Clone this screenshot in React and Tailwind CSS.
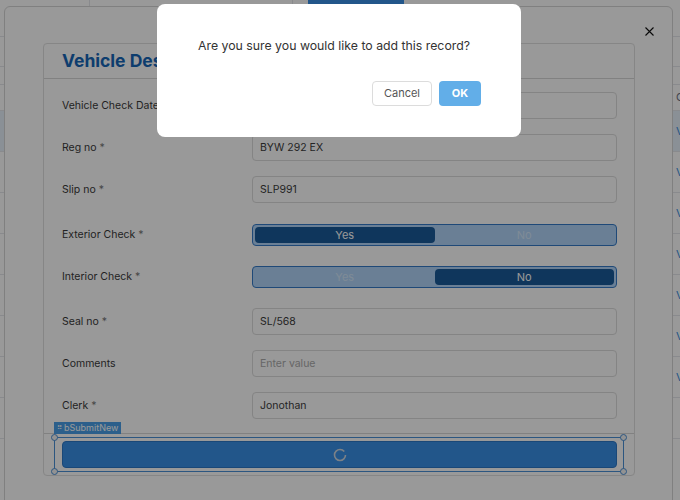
import React from 'react';

const font = { fontFamily: 'Inter, "Liberation Sans", sans-serif' };

// Rows of the table that sits behind the modal.
const tableRows = [0, 1, 2, 3, 4, 5, 6, 7];

const Background = () => (
  <div className="flex flex-col w-full">
    {/* top bar */}
    <div className="flex h-[37px] border-b border-gray-200">
      <div className="w-[90px] border-r border-gray-200" />
      <div className="w-[203px] border-r border-gray-200" />
      <div className="ml-[15px] w-[96px] h-[5px] bg-[#398fe6]" />
    </div>
    {/* filter row */}
    <div className="flex h-[48px] border-b border-gray-200">
      <div className="flex-1 border-b border-gray-200 h-[30px]" />
    </div>
    {/* header */}
    <div className="flex h-[26px] border-b border-gray-200 items-center">
      <div className="flex-1" />
      <div className="w-[7px] overflow-hidden pl-[3px] text-[11px] text-gray-500 whitespace-nowrap">Co</div>
    </div>
    {tableRows.map((r) => (
      <div
        key={r}
        className={`flex h-[41px] border-b border-gray-200 items-center ${r === 0 ? 'bg-[#e6f0fb]' : ''}`}
      >
        <div className="flex-1" />
        <div className="w-[7px] overflow-hidden pl-[3px] text-[11px] text-[#3d8fe0] whitespace-nowrap">
          {r < 7 ? 'V' : ''}
        </div>
      </div>
    ))}
  </div>
);

const Field = ({ label, required, value, placeholder, mt }) => (
  <div className={`flex items-center h-[27px] ${mt}`}>
    <div className="w-[190px] text-[10.5px] text-[#3a3a3a]">
      {label}
      {required && <span className="text-[#777]"> *</span>}
    </div>
    <div className="flex-1 h-[27px] border border-[#dcdcdc] rounded px-[7px] flex items-center text-[10.5px]">
      {value ? (
        <span className="text-[#3c3c3c]">{value}</span>
      ) : (
        <span className="text-[#ababab]">{placeholder}</span>
      )}
    </div>
  </div>
);

const Toggle = ({ label, value, mt }) => (
  <div className={`flex items-center h-[22px] ${mt}`}>
    <div className="w-[190px] text-[10.5px] text-[#3a3a3a]">
      {label}
      <span className="text-[#777]"> *</span>
    </div>
    <div className="flex-1 h-[22px] rounded border border-[#347bc8] bg-[#b1d4f8] p-[2px] flex text-[11px]">
      <div
        className={`flex-1 flex items-center justify-center rounded-sm ${
          value === 'Yes' ? 'bg-[#195a99] text-white' : 'text-[#d4e8fc]'
        }`}
      >
        Yes
      </div>
      <div
        className={`flex-1 flex items-center justify-center rounded-sm ${
          value === 'No' ? 'bg-[#195a99] text-white' : 'text-[#d4e8fc]'
        }`}
      >
        No
      </div>
    </div>
  </div>
);

const Handle = ({ pos }) => (
  <div className={`absolute w-[7px] h-[7px] rounded-full border border-[#4a8fd6] bg-[#f4f4f4] ${pos}`} />
);

const App = () => {
  return (
    <div className="relative w-[680px] h-[500px] overflow-hidden bg-white" style={font}>
      <Background />

      {/* Edit modal */}
      <div className="absolute left-[4px] top-[6px] w-[669px] h-[540px] bg-white rounded-md border border-[#d6d6d6] pl-[38px] pt-[36px]">
        <button className="absolute right-[18px] top-[19px] w-[10px] h-[10px] flex items-center justify-center">
          <svg width="9" height="9" viewBox="0 0 9 9" fill="none" stroke="#111" strokeWidth="1.1">
            <path d="M0.5 0.5 L8.5 8.5 M8.5 0.5 L0.5 8.5" />
          </svg>
        </button>

        <div className="w-[592px] border border-[#e0e0e0] rounded">
          <div className="h-[35px] border-b border-[#d8d8d8] px-[18px] flex items-center">
            <h2 className="text-[17.5px] font-bold text-[#1766b7]">Vehicle Despatch Check</h2>
          </div>

          <div className="flex flex-col pl-[18px] pr-[17px] pt-[13px] pb-[14px]">
            <Field label="Vehicle Check Date" required value="14/03/2024" mt="" />
            <Field label="Reg no" required value="BYW 292 EX" mt="mt-[15px]" />
            <Field label="Slip no" required value="SLP991" mt="mt-[15px]" />
            <Toggle label="Exterior Check" value="Yes" mt="mt-[21px]" />
            <Toggle label="Interior Check" value="No" mt="mt-[20px]" />
            <Field label="Seal no" required value="SL/568" mt="mt-[20px]" />
            <Field label="Comments" placeholder="Enter value" mt="mt-[15px]" />
            <Field label="Clerk" required value="Jonothan" mt="mt-[15px]" />
          </div>

          <div className="relative border-t border-[#d8d8d8] pl-[18px] pr-[17px] pt-[7px] pb-[7px]">
            <button className="w-full h-[27px] rounded bg-[#398fe6] border border-[#2c78c8] flex items-center justify-center">
              <svg width="14" height="14" viewBox="0 0 14 14" fill="none">
                <circle cx="7" cy="7" r="5.5" stroke="#cfd8e2" strokeWidth="1.6" strokeDasharray="30 5" />
              </svg>
            </button>

            {/* builder selection */}
            <div className="absolute left-[10px] top-[3px] w-[570px] h-[35px] border border-[#4a8fd6]">
              <Handle pos="-left-[4px] -top-[4px]" />
              <Handle pos="-left-[4px] -bottom-[4px]" />
              <Handle pos="-right-[4px] -top-[4px]" />
              <Handle pos="-right-[4px] -bottom-[4px]" />
            </div>
            <div className="absolute left-[10px] -top-[12px] h-[12px] px-[3px] bg-[#4a9fe8] text-white text-[9px] leading-[12px] flex items-center gap-[2px]">
              <span className="text-[7px]">⠿</span>
              <span>bSubmitNew</span>
            </div>
          </div>
        </div>
      </div>

      {/* backdrop */}
      <div className="absolute inset-0 bg-black/40" />

      {/* Confirm dialog */}
      <div className="absolute left-[157px] top-[4px] w-[364px] h-[133px] bg-white rounded-lg flex flex-col">
        <p className="mt-[33px] pr-[10px] text-center text-[12.3px] text-[#333]">
          Are you sure you would like to add this record?
        </p>
        <div className="mt-auto mb-[31px] flex justify-end gap-[7px] pr-[40px]">
          <button className="w-[60px] h-[25px] rounded border border-[#dcdcdc] bg-white text-[11px] text-[#555]">
            Cancel
          </button>
          <button className="w-[42px] h-[25px] rounded bg-[#62aee8] text-[11px] font-bold text-white">
            OK
          </button>
        </div>
      </div>
    </div>
  );
};

export default App;
